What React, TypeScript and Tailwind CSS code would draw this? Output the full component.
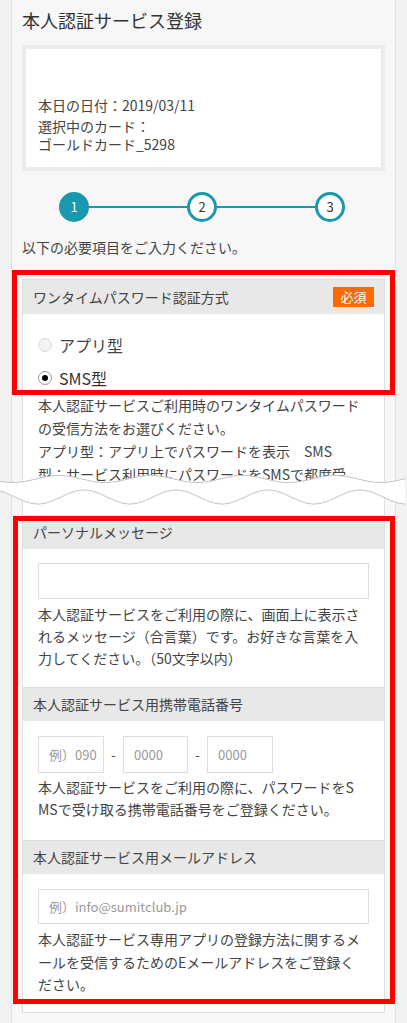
import React from "react";

const FONT = {
  fontFamily: '"Noto Sans CJK JP", "Noto Sans", "Liberation Sans", sans-serif',
};

// wave band that marks the cut in the screenshot
function Wave() {
  const W = 407;
  const top: string[] = [];
  const bot: string[] = [];
  for (let x = 0; x <= W; x += 3) {
    top.push(`${x},${(14 + 3.5 * Math.sin(((x + 10) / 92) * Math.PI * 2)).toFixed(2)}`);
    bot.push(`${x},${(32 + 7 * Math.sin(((x - 15) / 92) * Math.PI * 2)).toFixed(2)}`);
  }
  const fill = `M${top.join(" L")} L${[...bot].reverse().join(" L")} Z`;
  return (
    <svg
      className="absolute left-0 top-[465px]"
      width={W}
      height={48}
      viewBox={`0 0 ${W} 48`}
    >
      <path d={fill} fill="#ffffff" />
      <path d={`M${top.join(" L")}`} fill="none" stroke="#c4c4c4" strokeWidth="1" />
      <path d={`M${bot.join(" L")}`} fill="none" stroke="#c4c4c4" strokeWidth="1" />
    </svg>
  );
}

function Step({ n, active }: { n: number; active?: boolean }) {
  return (
    <div
      className={
        active
          ? "w-[30px] h-[30px] rounded-full bg-[#1a98ae] border-[3px] border-[#1a98ae] flex items-center justify-center text-[13px] text-white"
          : "w-[30px] h-[30px] rounded-full bg-white border-[3px] border-[#1a98ae] flex items-center justify-center text-[13px] text-[#333]"
      }
    >
      {n}
    </div>
  );
}

function Header({ title, required }: { title: string; required?: boolean }) {
  return (
    <div className="h-[34px] bg-[#e8e8e8] border-t border-[#dedede] first:border-t-0 px-[10px] flex items-center justify-between text-[14px] text-[#444]">
      <span>{title}</span>
      {required && (
        <span className="w-[41px] h-[20px] bg-[#ff6a00] text-white text-[13px] flex items-center justify-center">
          必須
        </span>
      )}
    </div>
  );
}

export default function App() {
  return (
    <div className="relative w-full min-h-[1023px] bg-[#f2f2f2] overflow-hidden" style={FONT}>
      <div className="ml-[11px] w-[385px] min-h-[1023px] border-x border-[#e0e0e0] bg-[#f7f7f7] px-[10px]">
        <h1 className="pt-[8px] text-[18px] leading-[24px] text-[#333]">本人認証サービス登録</h1>

        <div className="mt-[13px] border-[4px] border-[#ececec] bg-white px-[12px] pt-[46px] pb-[14px] text-[14px] text-[#444]">
          <p className="leading-[21px]">本日の日付：2019/03/11</p>
          <p className="mt-[1px] leading-[18px]">
            選択中のカード：
            <br />
            ゴールドカード_5298
          </p>
        </div>

        <div className="mt-[21px] ml-[37px] w-[286px] flex items-center">
          <Step n={1} active />
          <div className="flex-1 h-[2px] bg-[#1a98ae]" />
          <Step n={2} />
          <div className="flex-1 h-[2px] bg-[#1a98ae]" />
          <Step n={3} />
        </div>

        <p className="mt-[14px] text-[14px] leading-[22px] text-[#444]">以下の必要項目をご入力ください。</p>

        <div className="mt-[21px] border border-[#dedede] bg-white">
          <Header title="ワンタイムパスワード認証方式" required />
          <div className="px-[15px] pt-[14px] pb-[29px]">
            <div className="h-[33px] flex items-center gap-[7px] text-[16px] text-[#444]">
              <span className="w-[14px] h-[14px] rounded-full border border-[#dcdcdc] bg-[#f3f3f3]" />
              アプリ型
            </div>
            <div className="h-[33px] flex items-center gap-[7px] text-[16px] text-[#333]">
              <span className="w-[14px] h-[14px] rounded-full border border-[#9a9a9a] bg-white flex items-center justify-center">
                <span className="w-[6px] h-[6px] rounded-full bg-black" />
              </span>
              SMS型
            </div>
            <p className="text-[14px] leading-[23px] text-[#444] whitespace-nowrap">
              本人認証サービスご利用時のワンタイムパスワード
              <br />
              の受信方法をお選びください。
              <br />
              アプリ型：アプリ上でパスワードを表示　SMS
              <br />
              型：サービス利用時にパスワードをSMSで都度受
            </p>
          </div>

          <Header title="パーソナルメッセージ" />
          <div className="px-[15px] pt-[14px] pb-[18px]">
            <div className="h-[36px] border border-[#dedede] bg-white" />
            <p className="mt-[4px] text-[14px] leading-[22px] text-[#444] whitespace-nowrap">
              本人認証サービスをご利用の際に、画面上に表示さ
              <br />
              れるメッセージ（合言葉）です。お好きな言葉を入
              <br />
              力してください。（50文字以内）
            </p>
          </div>

          <Header title="本人認証サービス用携帯電話番号" />
          <div className="px-[15px] pt-[15px] pb-[20px]">
            <div className="flex items-center">
              <div className="w-[66px] h-[37px] border border-[#dedede] pl-[10px] flex items-center text-[13px] text-[#999]">
                例）090
              </div>
              <span className="w-[19px] text-center text-[14px] text-[#555]">-</span>
              <div className="w-[65px] h-[37px] border border-[#dedede] pl-[10px] flex items-center text-[13px] text-[#999]">
                0000
              </div>
              <span className="w-[19px] text-center text-[14px] text-[#555]">-</span>
              <div className="w-[66px] h-[37px] border border-[#dedede] pl-[10px] flex items-center text-[13px] text-[#999]">
                0000
              </div>
            </div>
            <p className="mt-[3px] text-[14px] leading-[22px] text-[#444] whitespace-nowrap">
              本人認証サービスをご利用の際に、パスワードをS
              <br />
              MSで受け取る携帯電話番号をご登録ください。
            </p>
          </div>

          <Header title="本人認証サービス用メールアドレス" />
          <div className="px-[15px] pt-[15px] pb-[16px]">
            <div className="h-[35px] border border-[#dedede] pl-[10px] flex items-center text-[13px] text-[#999]">
              例）info@sumitclub.jp
            </div>
            <p className="mt-[4px] text-[14px] leading-[22.5px] text-[#444] whitespace-nowrap">
              本人認証サービス専用アプリの登録方法に関するメ
              <br />
              ールを受信するためのEメールアドレスをご登録く
              <br />
              ださい。
            </p>
          </div>
        </div>
      </div>

      <Wave />

      <div className="absolute left-[12px] top-[270px] w-[383px] h-[125px] border-[5px] border-[#ff0000]" />
      <div className="absolute left-[13px] top-[516px] w-[382px] h-[488px] border-[5px] border-[#ff0000]" />
    </div>
  );
}
